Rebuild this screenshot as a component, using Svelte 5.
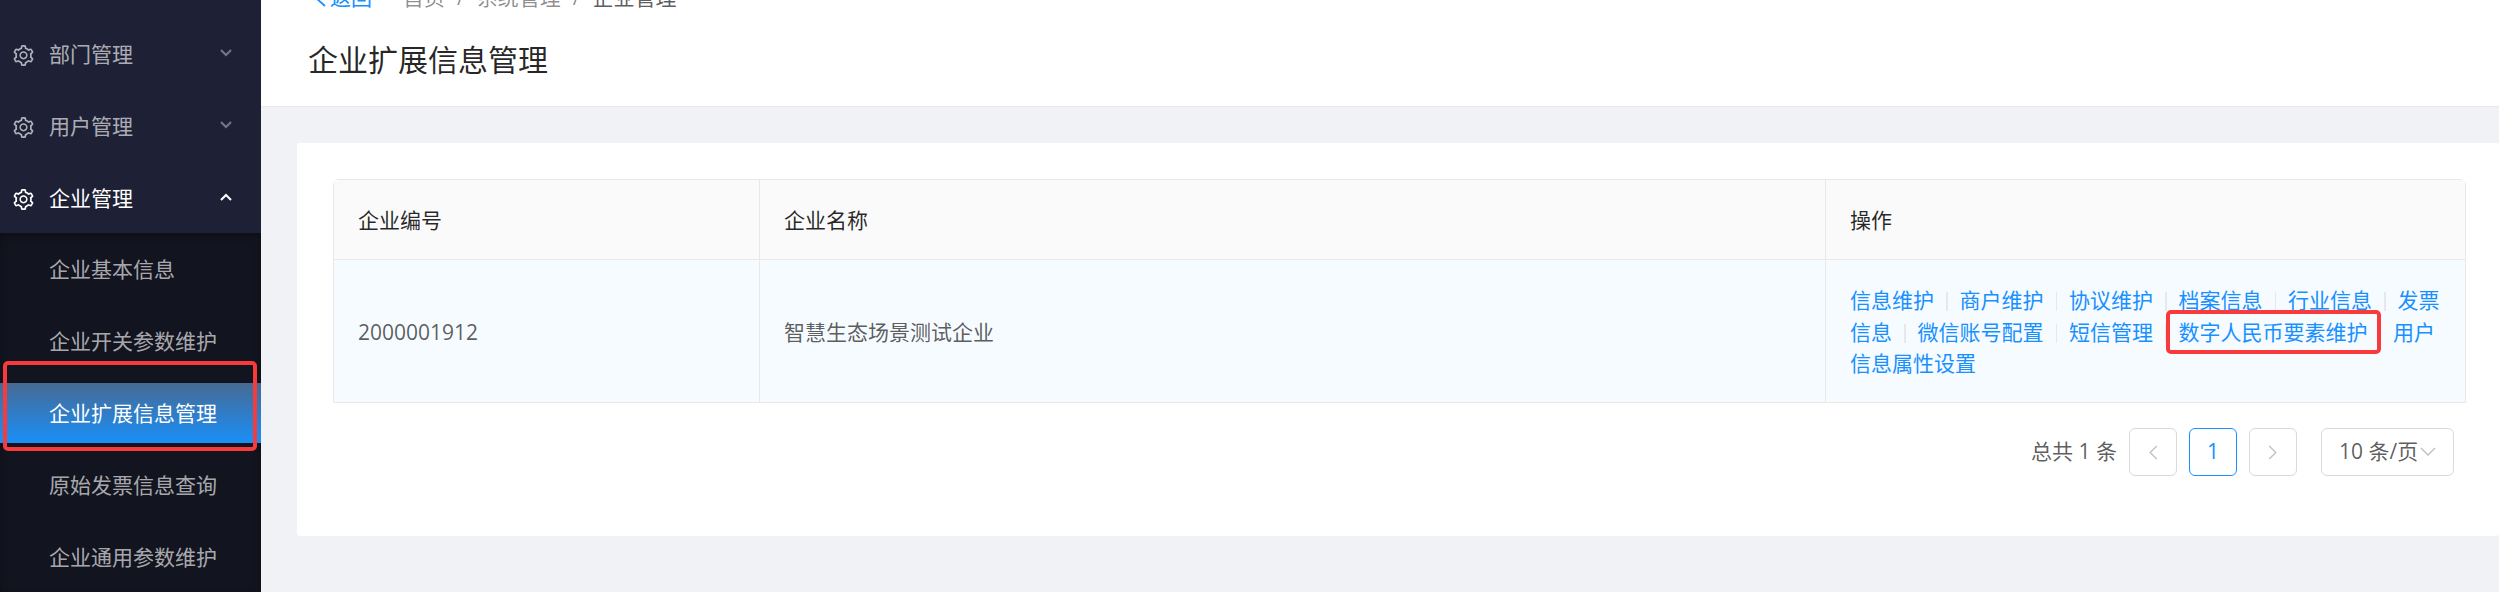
<script>
  const gear = 'M924.8 625.7l-65.5-56c3.1-19 4.7-38.4 4.7-57.8s-1.6-38.8-4.7-57.8l65.5-56a32.03 32.03 0 0 0 9.3-35.2l-.9-2.6a443.74 443.74 0 0 0-79.7-137.9l-1.8-2.1a32.12 32.12 0 0 0-35.1-9.5l-81.3 28.9c-30-24.6-63.5-44-99.7-57.6l-15.7-85a32.05 32.05 0 0 0-25.8-25.7l-2.7-.5c-52.1-9.4-106.9-9.4-159 0l-2.7.5a32.05 32.05 0 0 0-25.8 25.7l-15.8 85.4a351.86 351.86 0 0 0-99 57.4l-81.9-29.1a32 32 0 0 0-35.1 9.5l-1.8 2.1a446.02 446.02 0 0 0-79.7 137.9l-.9 2.6c-4.5 12.5-.8 26.5 9.3 35.2l66.3 56.6c-3.1 18.8-4.6 38-4.6 57.1 0 19.2 1.5 38.4 4.6 57.1L99 625.5a32.03 32.03 0 0 0-9.3 35.2l.9 2.6c18.1 50.4 44.9 96.9 79.7 137.9l1.8 2.1a32.12 32.12 0 0 0 35.1 9.5l81.9-29.1c29.8 24.5 63.1 43.9 99 57.4l15.8 85.4a32.05 32.05 0 0 0 25.8 25.7l2.7.5a449.4 449.4 0 0 0 159 0l2.7-.5a32.05 32.05 0 0 0 25.8-25.7l15.7-85a350 350 0 0 0 99.7-57.6l81.3 28.9a32 32 0 0 0 35.1-9.5l1.8-2.1c34.8-41.1 61.6-87.5 79.7-137.9l.9-2.6c4.5-12.3.8-26.3-9.3-35zM788.3 465.9c2.5 15.1 3.8 30.6 3.8 46.1s-1.3 31-3.8 46.1l-6.6 40.1 74.7 63.9a370.03 370.03 0 0 1-42.6 73.6L721 702.8l-31.4 25.8c-23.9 19.6-50.5 35-79.3 45.8l-38.1 14.3-17.9 97a377.5 377.5 0 0 1-85 0l-17.9-97.2-37.8-14.5c-28.5-10.8-55-26.2-78.7-45.7l-31.4-25.9-93.4 33.2c-17-22.9-31.2-47.6-42.6-73.6l75.5-64.5-6.5-40c-2.4-14.9-3.7-30.3-3.7-45.5 0-15.3 1.2-30.6 3.7-45.5l6.5-40-75.5-64.5c11.3-26.1 25.6-50.7 42.6-73.6l93.4 33.2 31.4-25.9c23.7-19.5 50.2-34.9 78.7-45.7l37.9-14.3 17.9-97.2c28.1-3.2 56.8-3.2 85 0l17.9 97 38.1 14.3c28.7 10.8 55.4 26.2 79.3 45.8l31.4 25.8 92.8-32.9c17 22.9 31.2 47.6 42.6 73.6L781.8 426l6.5 39.9zM512 326c-97.2 0-176 78.8-176 176s78.8 176 176 176 176-78.8 176-176-78.8-176-176-176zm79.2 255.2A111.6 111.6 0 0 1 512 614c-29.9 0-58-11.7-79.2-32.8A111.6 111.6 0 0 1 400 502c0-29.9 11.7-58 32.8-79.2C454 401.6 482.1 390 512 390c29.9 0 58 11.6 79.2 32.8A111.6 111.6 0 0 1 624 502c0 29.9-11.7 58-32.8 79.2z';

  const groups = [
    { name: '部门管理', open: false },
    { name: '用户管理', open: false },
    { name: '企业管理', open: true }
  ];
  const subItems = ['企业基本信息', '企业开关参数维护', '企业扩展信息管理', '原始发票信息查询', '企业通用参数维护'];
  const activeSub = '企业扩展信息管理';
</script>

<div class="page">
  <aside class="sidebar">
    <ul class="menu">
      {#each groups as group}
        <li class="group" class:open={group.open}>
          <svg class="gear" viewBox="64 64 896 896" fill="currentColor"><path d={gear} /></svg>
          <span class="group-name">{group.name}</span>
          <svg class="arrow" viewBox="0 0 12 8" fill="none" stroke="currentColor" stroke-width="2">
            {#if group.open}
              <path d="M1 7l5-5 5 5" />
            {:else}
              <path d="M1 1l5 5 5-5" />
            {/if}
          </svg>
        </li>
      {/each}
    </ul>
    <ul class="submenu">
      {#each subItems as item}
        <li class="sub" class:active={item === activeSub}>{item}</li>
      {/each}
    </ul>
  </aside>

  <main class="content">
    <header class="head">
      <div class="crumbs">
        <a class="back" href="#back">
          <svg viewBox="0 0 12 18" fill="none" stroke="currentColor" stroke-width="1.8"><path d="M11 1L2 9l9 8" /></svg>
          返回
        </a>
        <span class="crumb">首页</span>
        <span class="sep">/</span>
        <span class="crumb">系统管理</span>
        <span class="sep">/</span>
        <span class="crumb last">企业管理</span>
      </div>
      <h1>企业扩展信息管理</h1>
    </header>

    <section class="card">
      <div class="table">
        <div class="th">企业编号</div>
        <div class="th">企业名称</div>
        <div class="th end">操作</div>
        <div class="td num">2000001912</div>
        <div class="td">智慧生态场景测试企业</div>
        <div class="td end actions">
          <a href="#a">信息维护</a><i></i><a href="#a">商户维护</a><i></i><a href="#a">协议维护</a><i></i><a href="#a">档案信息</a><i></i><a href="#a">行业信息</a><i></i><a href="#a">发票信息</a><i></i><a href="#a">微信账号配置</a><i></i><a href="#a">短信管理</a><i></i><a class="marked" href="#a">数字人民币要素维护</a><i></i><a href="#a">用户信息属性设置</a>
        </div>
      </div>

      <nav class="pager">
        <span class="total">总共 1 条</span>
        <span class="box">
          <svg viewBox="0 0 10 16" fill="none" stroke="currentColor" stroke-width="1.4"><path d="M9 1L2 8l7 7" /></svg>
        </span>
        <span class="box current">1</span>
        <span class="box">
          <svg viewBox="0 0 10 16" fill="none" stroke="currentColor" stroke-width="1.4"><path d="M1 1l7 7-7 7" /></svg>
        </span>
        <span class="size">
          10 条/页
          <svg viewBox="0 0 16 10" fill="none" stroke="currentColor" stroke-width="1.4"><path d="M1 1l7 7 7-7" /></svg>
        </span>
      </nav>
    </section>
  </main>
</div>

<style>
  :global(body) {
    margin: 0;
    background: #f0f2f5;
  }
  ul {
    list-style: none;
    margin: 0;
    padding: 0;
  }
  a {
    color: #1890ff;
    text-decoration: none;
  }
  .page {
    display: flex;
    height: 592px;
    overflow: hidden;
    font-family: "Open Sans", "Noto Sans CJK SC", sans-serif;
    font-size: 21px;
    line-height: 1.5;
    color: rgba(0, 0, 0, 0.65);
  }
  .sidebar {
    width: 261px;
    flex: none;
    background: #1e2136;
    display: flex;
    flex-direction: column;
    padding-top: 25px;
    box-sizing: border-box;
  }
  .menu {
    display: flex;
    flex-direction: column;
    gap: 12px;
    padding-bottom: 4px;
  }
  .group {
    height: 60px;
    display: flex;
    align-items: center;
    padding: 0 29px 0 13px;
    color: rgba(255, 255, 255, 0.65);
  }
  .group.open {
    color: #fff;
  }
  .gear {
    width: 21px;
    height: 21px;
    margin-right: 15px;
    flex: none;
  }
  .group-name {
    flex: 1;
  }
  .arrow {
    width: 12px;
    height: 8px;
    margin-top: -5px;
    opacity: 0.6;
  }
  .group.open .arrow {
    opacity: 1;
  }
  .submenu {
    flex: 1;
    background: #12141f;
    box-shadow: inset 0 3px 8px rgba(0, 0, 0, 0.3);
    padding-top: 6px;
    display: flex;
    flex-direction: column;
    gap: 12px;
  }
  .sub {
    height: 60px;
    line-height: 60px;
    padding-left: 49px;
    color: rgba(255, 255, 255, 0.65);
    position: relative;
  }
  .sub.active {
    color: #fff;
    background: linear-gradient(180deg, #466a93 0%, #1a8ff8 100%);
  }
  .sub.active::after {
    content: "";
    position: absolute;
    left: 3px;
    width: 254px;
    top: -22px;
    height: 90px;
    box-sizing: border-box;
    border: 4px solid #f93a3d;
    border-radius: 5px;
  }
  .content {
    flex: 1;
    min-width: 0;
    display: flex;
    flex-direction: column;
  }
  .head {
    height: 106px;
    background: #fff;
    border-bottom: 1.5px solid #e8e8e8;
    padding-left: 48px;
  }
  .crumbs {
    display: flex;
    align-items: center;
    margin-top: -18px;
    height: 32px;
    white-space: nowrap;
  }
  .back {
    display: flex;
    align-items: center;
    gap: 4px;
    margin-right: 31px;
  }
  .back svg {
    width: 12px;
    height: 18px;
    margin-left: 5px;
  }
  .crumb {
    color: rgba(0, 0, 0, 0.45);
  }
  .crumb.last {
    color: rgba(0, 0, 0, 0.65);
  }
  .sep {
    color: rgba(0, 0, 0, 0.45);
    margin: 0 12px;
  }
  h1 {
    margin: 23px 0 0 -1px;
    font-size: 30px;
    font-weight: 400;
    line-height: 45px;
    color: rgba(0, 0, 0, 0.85);
  }
  .card {
    margin: 36px 0 0 36px;
    background: #fff;
    border-radius: 3px;
    padding: 36px 33px 60px 36px;
    height: 393px;
    box-sizing: border-box;
  }
  .table {
    display: grid;
    grid-template-columns: 426px 1066px 1fr;
    border: 1.5px solid #e8e8e8;
    border-radius: 6px 6px 0 0;
  }
  .th,
  .td {
    padding: 24px;
    border-right: 1.5px solid #e8e8e8;
    box-sizing: border-box;
  }
  .th {
    height: 80px;
    padding-top: 25px;
    background: #fafafa;
    border-bottom: 1.5px solid #e8e8e8;
    color: rgba(0, 0, 0, 0.85);
  }
  .th.end,
  .td.end {
    border-right: none;
  }
  .td {
    background: #f6fbff;
    height: 142px;
    padding-top: 25px;
    padding-bottom: 21px;
    display: flex;
    align-items: center;
  }
  .td.actions {
    display: block;
    line-height: 31.5px;
  }
  .actions i {
    display: inline-block;
    width: 1.5px;
    height: 19px;
    vertical-align: -3px;
    background: #e8e8e8;
    margin: 0 12px;
  }
  .marked {
    position: relative;
  }
  .marked::after {
    content: "";
    position: absolute;
    left: -13px;
    right: -13px;
    top: -8px;
    bottom: -8px;
    border: 4px solid #f93a3d;
    border-radius: 5px;
  }
  .pager {
    display: flex;
    align-items: center;
    justify-content: flex-end;
    margin-top: 25px;
    margin-right: 12px;
    gap: 12px;
  }
  .box {
    width: 48px;
    height: 48px;
    box-sizing: border-box;
    border: 1.5px solid #d9d9d9;
    border-radius: 6px;
    display: flex;
    align-items: center;
    justify-content: center;
    color: rgba(0, 0, 0, 0.25);
  }
  .box svg {
    width: 10px;
    height: 15px;
  }
  .box.current {
    border-color: #1890ff;
    color: #1890ff;
  }
  .size {
    width: 133px;
    height: 48px;
    box-sizing: border-box;
    border: 1.5px solid #d9d9d9;
    border-radius: 6px;
    display: flex;
    align-items: center;
    padding-left: 17px;
    margin-left: 12px;
    white-space: nowrap;
  }
  .size svg {
    width: 16px;
    height: 10px;
    margin-left: 2px;
    color: rgba(0, 0, 0, 0.25);
  }
</style>
